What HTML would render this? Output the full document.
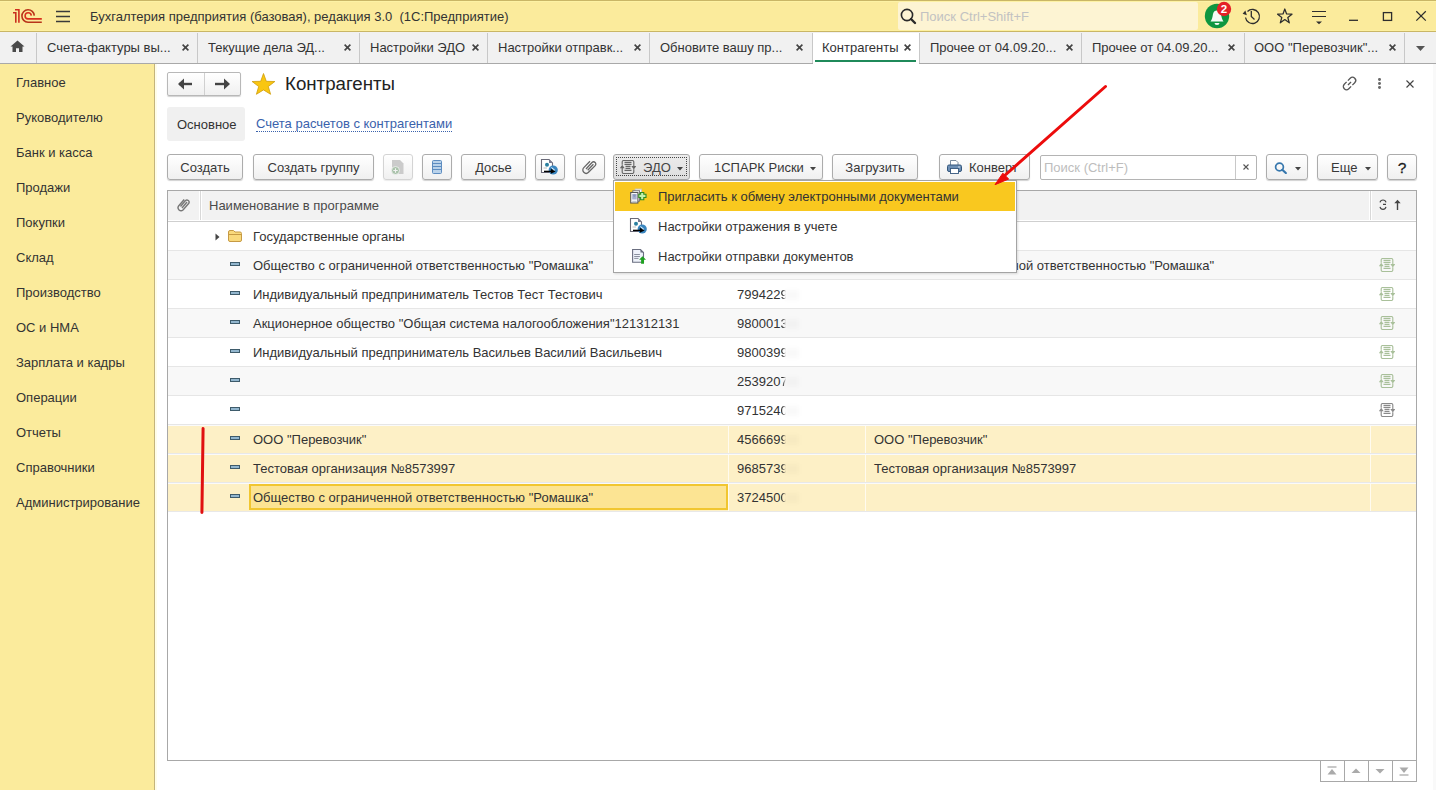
<!DOCTYPE html>
<html><head><meta charset="utf-8">
<style>
*{box-sizing:border-box;margin:0;padding:0}
html,body{width:1436px;height:790px;overflow:hidden;background:#fff;font-family:"Liberation Sans",sans-serif;font-size:13px;color:#333}
.a{position:absolute}
#title{left:0;top:0;width:1436px;height:32px;background:#fbeb9c;border-top:1px solid #c9b666;border-bottom:1px solid #c9b666;box-shadow:inset 0 1px 0 #fdf2a4,inset 0 -1px 0 #fdf0a0}
#tabs{left:0;top:32px;width:1436px;height:32px;background:#f1f1f1;border-bottom:1px solid #a9a9a9}
.sep{position:absolute;top:1px;width:1px;height:30px;background:#c8c8c8}
.tt{position:absolute;top:1px;line-height:30px;white-space:nowrap;color:#333;font-size:13px}
.tx{position:absolute;top:1px;line-height:30px;font-size:15px;color:#444;font-weight:bold}
#side{left:0;top:64px;width:155px;height:726px;background:#fbeb9c;border-right:1px solid #c4b47c;box-shadow:2px 0 0 #fffde9}
.nav{position:absolute;left:16px;font-size:13px;color:#333;line-height:16px}
.btn{position:absolute;top:154px;height:26px;border:1px solid #acacac;border-radius:3px;background:linear-gradient(#ffffff,#f0f0f0);box-shadow:0 1px 1px rgba(0,0,0,.18);text-align:center;line-height:25px;color:#383838;font-size:13px;white-space:nowrap}
.row{position:absolute;left:168px;width:1248px;height:29px;border-bottom:1px solid #e6e6e6}
.c{position:absolute;top:0;line-height:28px;white-space:nowrap;color:#333;font-size:13px}
.dash{position:absolute;left:61px;top:12px;width:11px;height:4px;background:#8fb0c8;border:1px solid #6b8fa8;border-radius:1px}
</style></head><body>
<!-- TITLE BAR -->
<div id="title" class="a">
  <svg class="a" style="left:0;top:-1px" width="76" height="31" viewBox="0 0 76 31"><g fill="none" stroke-width="1.6">
<path d="M13 12.7 H15.8 V22.8" stroke="#c8301e"/><path d="M15 9.8 H18.9 V22.8" stroke="#d0301e"/>
<path d="M34.3 15.6 A6.2 6.2 0 1 0 28 22.2 H41.8" stroke="#b8341a"/>
<path d="M31.3 15.6 A3.1 3.1 0 1 0 28 18.9 H41.8" stroke="#d8301e"/></g>
<path d="M56 11.5 H70 M56 16.5 H70 M56 21.5 H70" stroke="#3a3a3a" stroke-width="1.3"/></svg>
<div class="a" style="left:90px;top:8px;font-size:13px;color:#333;white-space:nowrap;line-height:16px">Бухгалтерия предприятия (базовая), редакция 3.0&nbsp;&nbsp;(1С:Предприятие)</div>
  <div class="a" style="left:898px;top:1px;width:300px;height:28px;background:#fdf4d3;border-radius:2px"></div>
  <div class="a" style="left:920px;top:8px;font-size:13px;color:#c2c2c2;white-space:nowrap;line-height:16px">Поиск Ctrl+Shift+F</div>
</div>
<svg class="a" style="left:900px;top:8px" width="17" height="17" viewBox="0 0 17 17"><circle cx="7" cy="7" r="5.6" fill="none" stroke="#2a2a2a" stroke-width="1.6"/><path d="M11 11 L15 15" stroke="#2a2a2a" stroke-width="2.4" stroke-linecap="round"/></svg>
<svg class="a" style="left:1200px;top:0" width="236" height="31" viewBox="0 0 236 31">
<circle cx="17" cy="16" r="12.2" fill="#0e9640"/>
<path d="M10.5 21.5 C12 20 12.5 17 13 14 C13.5 11.5 15 10.5 17 10.5 C19 10.5 20.5 11.5 21 14 C21.5 17 22 20 23.5 21.5 Z" fill="#f4fbf6"/>
<path d="M14.5 23 H19.5 A2.5 2 0 0 1 14.5 23 Z" fill="#f4fbf6"/>
<circle cx="24" cy="9" r="7.2" fill="#e42127"/>
<text x="24" y="13" text-anchor="middle" font-family="Liberation Sans" font-weight="bold" font-size="11.5" fill="#fff">2</text>
<g fill="none" stroke="#2e2e2e" stroke-width="1.3"><path d="M45.5 17.5 A7 7 0 1 0 47.5 11.5"/><path d="M51.3 11 V16.5 L54.5 19.5"/></g>
<path d="M43 14.5 L47.5 14.5 L44.5 10.5 Z" fill="#2e2e2e" transform="rotate(20 45 13)"/>
<path d="M84.8 9 L86.6 14 L92 14.2 L87.8 17.5 L89.3 22.8 L84.8 19.6 L80.3 22.8 L81.8 17.5 L77.6 14.2 L83 14 Z" fill="none" stroke="#2e2e2e" stroke-width="1.25" stroke-linejoin="round"/>
<path d="M112 11.5 H126 M112 16.5 H126" stroke="#2e2e2e" stroke-width="1.2"/><path d="M116 21.5 H122 L119 24.3 Z" fill="#2e2e2e"/>
<path d="M149 20.3 H158" stroke="#2e2e2e" stroke-width="1.3"/>
<rect x="183.4" y="12.6" width="8.2" height="7.8" fill="none" stroke="#2e2e2e" stroke-width="1.3"/>
<path d="M216.3 11.2 L225.8 20.6 M225.8 11.2 L216.3 20.6" stroke="#2e2e2e" stroke-width="1.25"/>
</svg>
<!-- TABS -->
<div id="tabs" class="a">
  <svg class="a" style="left:10px;top:8px" width="15" height="13" viewBox="0 0 15 14" preserveAspectRatio="none"><path d="M7.5 0.5 L14.5 7 H12.5 V13 H9 V9 H6 V13 H2.5 V7 H0.5 Z" fill="#4a4a4a"/></svg>
  <div class="sep" style="left:36px"></div>
  <div class="tt" style="left:47px">Счета-фактуры вы...</div><svg class="a" style="left:182.1px;top:11.5px" width="7" height="7" viewBox="0 0 7 7"><path d="M0.6 0.6 L6.4 6.4 M6.4 0.6 L0.6 6.4" stroke="#444" stroke-width="1.6"/></svg>
  <div class="sep" style="left:197px"></div>
  <div class="tt" style="left:208px">Текущие дела ЭД...</div><svg class="a" style="left:343.5px;top:11.5px" width="7" height="7" viewBox="0 0 7 7"><path d="M0.6 0.6 L6.4 6.4 M6.4 0.6 L0.6 6.4" stroke="#444" stroke-width="1.6"/></svg>
  <div class="sep" style="left:359px"></div>
  <div class="tt" style="left:370px">Настройки ЭДО</div><svg class="a" style="left:471.5px;top:11.5px" width="7" height="7" viewBox="0 0 7 7"><path d="M0.6 0.6 L6.4 6.4 M6.4 0.6 L0.6 6.4" stroke="#444" stroke-width="1.6"/></svg>
  <div class="sep" style="left:487px"></div>
  <div class="tt" style="left:498px">Настройки отправк...</div><svg class="a" style="left:634.0px;top:11.5px" width="7" height="7" viewBox="0 0 7 7"><path d="M0.6 0.6 L6.4 6.4 M6.4 0.6 L0.6 6.4" stroke="#444" stroke-width="1.6"/></svg>
  <div class="sep" style="left:649px"></div>
  <div class="tt" style="left:660px">Обновите вашу пр...</div><svg class="a" style="left:796.2px;top:11.5px" width="7" height="7" viewBox="0 0 7 7"><path d="M0.6 0.6 L6.4 6.4 M6.4 0.6 L0.6 6.4" stroke="#444" stroke-width="1.6"/></svg>
  <div class="sep" style="left:812px"></div>
  <div class="a" style="left:813px;top:1px;width:106px;height:31px;background:#fff"></div>
  <div class="a" style="left:815px;top:28px;width:101px;height:2px;background:#1f8a5a"></div>
  <div class="tt" style="left:822px">Контрагенты</div><svg class="a" style="left:903.5px;top:11.5px" width="7" height="7" viewBox="0 0 7 7"><path d="M0.6 0.6 L6.4 6.4 M6.4 0.6 L0.6 6.4" stroke="#444" stroke-width="1.6"/></svg>
  <div class="sep" style="left:919px"></div>
  <div class="tt" style="left:930px">Прочее от 04.09.20...</div><svg class="a" style="left:1065.5px;top:11.5px" width="7" height="7" viewBox="0 0 7 7"><path d="M0.6 0.6 L6.4 6.4 M6.4 0.6 L0.6 6.4" stroke="#444" stroke-width="1.6"/></svg>
  <div class="sep" style="left:1081px"></div>
  <div class="tt" style="left:1092px">Прочее от 04.09.20...</div><svg class="a" style="left:1227.5px;top:11.5px" width="7" height="7" viewBox="0 0 7 7"><path d="M0.6 0.6 L6.4 6.4 M6.4 0.6 L0.6 6.4" stroke="#444" stroke-width="1.6"/></svg>
  <div class="sep" style="left:1244px"></div>
  <div class="tt" style="left:1254px">ООО "Перевозчик"...</div><svg class="a" style="left:1388.5px;top:11.5px" width="7" height="7" viewBox="0 0 7 7"><path d="M0.6 0.6 L6.4 6.4 M6.4 0.6 L0.6 6.4" stroke="#444" stroke-width="1.6"/></svg>
  <div class="sep" style="left:1404px"></div>
  <svg class="a" style="left:1416px;top:14px" width="9" height="5" viewBox="0 0 9 5"><path d="M0 0 H9 L4.5 5 Z" fill="#555"/></svg>
</div>
<!-- SIDEBAR -->
<div id="side" class="a">
  <div class="nav" style="top:11px">Главное</div>
  <div class="nav" style="top:46px">Руководителю</div>
  <div class="nav" style="top:81px">Банк и касса</div>
  <div class="nav" style="top:116px">Продажи</div>
  <div class="nav" style="top:151px">Покупки</div>
  <div class="nav" style="top:186px">Склад</div>
  <div class="nav" style="top:221px">Производство</div>
  <div class="nav" style="top:256px">ОС и НМА</div>
  <div class="nav" style="top:291px">Зарплата и кадры</div>
  <div class="nav" style="top:326px">Операции</div>
  <div class="nav" style="top:361px">Отчеты</div>
  <div class="nav" style="top:396px">Справочники</div>
  <div class="nav" style="top:431px">Администрирование</div>
</div>
<!-- TABLE -->
<div class="a" style="left:167px;top:190px;width:1250px;height:571px;border:1px solid #a8a8a8;background:#fff"></div>
<div class="a" style="left:168px;top:191px;width:1248px;height:31px;background:#f2f2f2;border-bottom:1px solid #cfcfcf"></div>
<div class="a" style="left:200px;top:191px;width:1px;height:30px;background:#d8d8d8"></div>
<div class="a" style="left:1370px;top:191px;width:1px;height:30px;background:#d8d8d8"></div>
<svg class="a" style="left:177px;top:197px" width="14" height="16" viewBox="0 0 14 16"><path d="M3.5 9.5 L8.5 3.5 A2.2 2.2 0 0 1 11.8 6.3 L6 13 A3 3 0 0 1 1.6 9 L7.2 2.5 M5 11 L10 5" fill="none" stroke="#777" stroke-width="1.4"/></svg>
<div class="a" style="left:209px;top:198px;font-size:13px;color:#4a4a4a;line-height:16px;white-space:nowrap">Наименование в программе</div>
<svg class="a" style="left:1378px;top:199px" width="10" height="12" viewBox="0 0 10 12"><g fill="none" stroke="#444" stroke-width="1.15"><path d="M2 3.3 C2.5 1.5 4 1 5 1 S7.5 1.5 8 3.3 M5 5.3 H8 M2 7.8 C2.5 9.8 4 10.3 5 10.3 S7.5 9.8 8 7.8"/></g></svg>
<div class="a" style="left:168px;top:220px;width:1248px;height:1px;background:#fff"></div>
<div class="a" style="left:199px;top:191px;width:1px;height:29px;background:#fff"></div><div class="a" style="left:201px;top:191px;width:1px;height:29px;background:#fff"></div>
<div class="a" style="left:1369px;top:191px;width:1px;height:29px;background:#fff"></div><div class="a" style="left:1371px;top:191px;width:1px;height:29px;background:#fff"></div>
<svg class="a" style="left:1393px;top:199px" width="9" height="12" viewBox="0 0 9 12"><path d="M4.5 3 V11" stroke="#444" stroke-width="1.4"/><path d="M1.3 4.3 L4.5 0.8 L7.7 4.3 Z" fill="#444"/></svg>
<div class="a" style="left:168px;top:222px;width:1248px;height:29px;background:#fff;border-bottom:1px solid #e6e6e6"></div>
<div class="a" style="left:168px;top:251px;width:1248px;height:29px;background:#f8f8f8;border-bottom:1px solid #e6e6e6"></div>
<div class="a" style="left:168px;top:280px;width:1248px;height:29px;background:#fff;border-bottom:1px solid #e6e6e6"></div>
<div class="a" style="left:168px;top:309px;width:1248px;height:29px;background:#f8f8f8;border-bottom:1px solid #e6e6e6"></div>
<div class="a" style="left:168px;top:338px;width:1248px;height:29px;background:#fff;border-bottom:1px solid #e6e6e6"></div>
<div class="a" style="left:168px;top:367px;width:1248px;height:29px;background:#f8f8f8;border-bottom:1px solid #e6e6e6"></div>
<div class="a" style="left:168px;top:396px;width:1248px;height:29px;background:#fff;border-bottom:1px solid #e6e6e6"></div>
<div class="a" style="left:168px;top:425px;width:1248px;height:29px;background:#fdf0c6;border-top:1px solid #fafafa;border-bottom:1px solid #e8e8e8"></div>
<div class="a" style="left:728px;top:426px;width:1px;height:27px;background:#fffbef"></div>
<div class="a" style="left:865px;top:426px;width:1px;height:27px;background:#fffbef"></div>
<div class="a" style="left:1370px;top:426px;width:1px;height:27px;background:#fffbef"></div>
<div class="a" style="left:168px;top:454px;width:1248px;height:29px;background:#fdf0c6;border-top:1px solid #fafafa;border-bottom:1px solid #e8e8e8"></div>
<div class="a" style="left:728px;top:455px;width:1px;height:27px;background:#fffbef"></div>
<div class="a" style="left:865px;top:455px;width:1px;height:27px;background:#fffbef"></div>
<div class="a" style="left:1370px;top:455px;width:1px;height:27px;background:#fffbef"></div>
<div class="a" style="left:168px;top:483px;width:1248px;height:29px;background:#fdf0c6;border-top:1px solid #fafafa;border-bottom:1px solid #e8e8e8"></div>
<div class="a" style="left:728px;top:484px;width:1px;height:27px;background:#fffbef"></div>
<div class="a" style="left:865px;top:484px;width:1px;height:27px;background:#fffbef"></div>
<div class="a" style="left:1370px;top:484px;width:1px;height:27px;background:#fffbef"></div>
<svg class="a" style="left:215px;top:233px" width="5" height="8" viewBox="0 0 5 8"><path d="M0.5 0.5 L4.5 4 L0.5 7.5 Z" fill="#444"/></svg>
<svg class="a" style="left:228px;top:230px" width="14" height="12" viewBox="0 0 14 12"><path d="M0.5 2 A1.5 1.5 0 0 1 2 0.5 H5.5 L7 2 H12 A1.5 1.5 0 0 1 13.5 3.5 V10 A1.5 1.5 0 0 1 12 11.5 H2 A1.5 1.5 0 0 1 0.5 10 Z" fill="#f9d97c" stroke="#c69a44"/><path d="M0.5 4.5 H13.5" stroke="#c69a44"/></svg>
<div class="a" style="left:253px;top:229px;font-size:13px;color:#333;line-height:16px;white-space:nowrap">Государственные органы</div>
<div class="a" style="left:230px;top:262px;width:10px;height:4px;background:#92b6ce;border:1px solid #3e5b6b"></div>
<div class="a" style="left:253px;top:258px;font-size:13px;color:#333;line-height:16px;white-space:nowrap">Общество с ограниченной ответственностью "Ромашка"</div>
<div class="a" style="left:874px;top:258px;font-size:13px;color:#333;line-height:16px;white-space:nowrap">Общество с ограниченной ответственностью "Ромашка"</div>
<svg class="a" style="left:1379px;top:257.5px" width="16" height="14" viewBox="0 0 16 14"><g fill="none" stroke="#a9c09a" stroke-width="1.15"><path d="M2.2 4.8 V2 A1.5 1.5 0 0 1 3.7 0.5 H12.3 A1.5 1.5 0 0 1 13.8 2 V6.5 M13.8 9.2 V12 A1.5 1.5 0 0 1 12.3 13.5 H3.7 A1.5 1.5 0 0 1 2.2 12 V7.8 M4.5 2.3 H11.5 M4.5 4.3 H11.5 M5.5 6.4 H10.5 M5.5 8.4 H10.5 M4.5 10.4 H11.5"/></g><path d="M-0.3 8.3 L2.2 4.8 L4.7 8.3 Z M11.3 6 L13.8 9.5 L16.3 6 Z" fill="#a9c09a"/></svg>
<div class="a" style="left:230px;top:291px;width:10px;height:4px;background:#92b6ce;border:1px solid #3e5b6b"></div>
<div class="a" style="left:253px;top:287px;font-size:13px;color:#333;line-height:16px;white-space:nowrap">Индивидуальный предприниматель Тестов Тест Тестович</div>
<div class="a" style="left:737px;top:287px;font-size:13px;color:#333;line-height:16px;white-space:nowrap">799422<span style="display:inline-block;-webkit-mask-image:linear-gradient(to right,#000 35%,transparent 75%)">9</span></div>
<div class="a" style="left:785px;top:290px;width:14px;height:10px;background:rgba(0,0,0,.025);filter:blur(2px)"></div>
<svg class="a" style="left:1379px;top:286.5px" width="16" height="14" viewBox="0 0 16 14"><g fill="none" stroke="#a9c09a" stroke-width="1.15"><path d="M2.2 4.8 V2 A1.5 1.5 0 0 1 3.7 0.5 H12.3 A1.5 1.5 0 0 1 13.8 2 V6.5 M13.8 9.2 V12 A1.5 1.5 0 0 1 12.3 13.5 H3.7 A1.5 1.5 0 0 1 2.2 12 V7.8 M4.5 2.3 H11.5 M4.5 4.3 H11.5 M5.5 6.4 H10.5 M5.5 8.4 H10.5 M4.5 10.4 H11.5"/></g><path d="M-0.3 8.3 L2.2 4.8 L4.7 8.3 Z M11.3 6 L13.8 9.5 L16.3 6 Z" fill="#a9c09a"/></svg>
<div class="a" style="left:230px;top:320px;width:10px;height:4px;background:#92b6ce;border:1px solid #3e5b6b"></div>
<div class="a" style="left:253px;top:316px;font-size:13px;color:#333;line-height:16px;white-space:nowrap">Акционерное общество "Общая система налогообложения"121312131</div>
<div class="a" style="left:737px;top:316px;font-size:13px;color:#333;line-height:16px;white-space:nowrap">980001<span style="display:inline-block;-webkit-mask-image:linear-gradient(to right,#000 35%,transparent 75%)">3</span></div>
<div class="a" style="left:785px;top:319px;width:14px;height:10px;background:rgba(0,0,0,.025);filter:blur(2px)"></div>
<svg class="a" style="left:1379px;top:315.5px" width="16" height="14" viewBox="0 0 16 14"><g fill="none" stroke="#a9c09a" stroke-width="1.15"><path d="M2.2 4.8 V2 A1.5 1.5 0 0 1 3.7 0.5 H12.3 A1.5 1.5 0 0 1 13.8 2 V6.5 M13.8 9.2 V12 A1.5 1.5 0 0 1 12.3 13.5 H3.7 A1.5 1.5 0 0 1 2.2 12 V7.8 M4.5 2.3 H11.5 M4.5 4.3 H11.5 M5.5 6.4 H10.5 M5.5 8.4 H10.5 M4.5 10.4 H11.5"/></g><path d="M-0.3 8.3 L2.2 4.8 L4.7 8.3 Z M11.3 6 L13.8 9.5 L16.3 6 Z" fill="#a9c09a"/></svg>
<div class="a" style="left:230px;top:349px;width:10px;height:4px;background:#92b6ce;border:1px solid #3e5b6b"></div>
<div class="a" style="left:253px;top:345px;font-size:13px;color:#333;line-height:16px;white-space:nowrap">Индивидуальный предприниматель Васильев Василий Васильевич</div>
<div class="a" style="left:737px;top:345px;font-size:13px;color:#333;line-height:16px;white-space:nowrap">980039<span style="display:inline-block;-webkit-mask-image:linear-gradient(to right,#000 35%,transparent 75%)">9</span></div>
<div class="a" style="left:785px;top:348px;width:14px;height:10px;background:rgba(0,0,0,.025);filter:blur(2px)"></div>
<svg class="a" style="left:1379px;top:344.5px" width="16" height="14" viewBox="0 0 16 14"><g fill="none" stroke="#a9c09a" stroke-width="1.15"><path d="M2.2 4.8 V2 A1.5 1.5 0 0 1 3.7 0.5 H12.3 A1.5 1.5 0 0 1 13.8 2 V6.5 M13.8 9.2 V12 A1.5 1.5 0 0 1 12.3 13.5 H3.7 A1.5 1.5 0 0 1 2.2 12 V7.8 M4.5 2.3 H11.5 M4.5 4.3 H11.5 M5.5 6.4 H10.5 M5.5 8.4 H10.5 M4.5 10.4 H11.5"/></g><path d="M-0.3 8.3 L2.2 4.8 L4.7 8.3 Z M11.3 6 L13.8 9.5 L16.3 6 Z" fill="#a9c09a"/></svg>
<div class="a" style="left:230px;top:378px;width:10px;height:4px;background:#92b6ce;border:1px solid #3e5b6b"></div>
<div class="a" style="left:737px;top:374px;font-size:13px;color:#333;line-height:16px;white-space:nowrap">253920<span style="display:inline-block;-webkit-mask-image:linear-gradient(to right,#000 35%,transparent 75%)">7</span></div>
<div class="a" style="left:785px;top:377px;width:14px;height:10px;background:rgba(0,0,0,.025);filter:blur(2px)"></div>
<svg class="a" style="left:1379px;top:373.5px" width="16" height="14" viewBox="0 0 16 14"><g fill="none" stroke="#a9c09a" stroke-width="1.15"><path d="M2.2 4.8 V2 A1.5 1.5 0 0 1 3.7 0.5 H12.3 A1.5 1.5 0 0 1 13.8 2 V6.5 M13.8 9.2 V12 A1.5 1.5 0 0 1 12.3 13.5 H3.7 A1.5 1.5 0 0 1 2.2 12 V7.8 M4.5 2.3 H11.5 M4.5 4.3 H11.5 M5.5 6.4 H10.5 M5.5 8.4 H10.5 M4.5 10.4 H11.5"/></g><path d="M-0.3 8.3 L2.2 4.8 L4.7 8.3 Z M11.3 6 L13.8 9.5 L16.3 6 Z" fill="#a9c09a"/></svg>
<div class="a" style="left:230px;top:407px;width:10px;height:4px;background:#92b6ce;border:1px solid #3e5b6b"></div>
<div class="a" style="left:737px;top:403px;font-size:13px;color:#333;line-height:16px;white-space:nowrap">971524<span style="display:inline-block;-webkit-mask-image:linear-gradient(to right,#000 35%,transparent 75%)">0</span></div>
<div class="a" style="left:785px;top:406px;width:14px;height:10px;background:rgba(0,0,0,.025);filter:blur(2px)"></div>
<svg class="a" style="left:1379px;top:402.5px" width="16" height="14" viewBox="0 0 16 14"><g fill="none" stroke="#8a8a8a" stroke-width="1.15"><path d="M2.2 4.8 V2 A1.5 1.5 0 0 1 3.7 0.5 H12.3 A1.5 1.5 0 0 1 13.8 2 V6.5 M13.8 9.2 V12 A1.5 1.5 0 0 1 12.3 13.5 H3.7 A1.5 1.5 0 0 1 2.2 12 V7.8 M4.5 2.3 H11.5 M4.5 4.3 H11.5 M5.5 6.4 H10.5 M5.5 8.4 H10.5 M4.5 10.4 H11.5"/></g><path d="M-0.3 8.3 L2.2 4.8 L4.7 8.3 Z M11.3 6 L13.8 9.5 L16.3 6 Z" fill="#8a8a8a"/></svg>
<div class="a" style="left:230px;top:436px;width:10px;height:4px;background:#92b6ce;border:1px solid #3e5b6b"></div>
<div class="a" style="left:253px;top:432px;font-size:13px;color:#333;line-height:16px;white-space:nowrap">ООО "Перевозчик"</div>
<div class="a" style="left:737px;top:432px;font-size:13px;color:#333;line-height:16px;white-space:nowrap">456669<span style="display:inline-block;-webkit-mask-image:linear-gradient(to right,#000 35%,transparent 75%)">9</span></div>
<div class="a" style="left:785px;top:435px;width:14px;height:10px;background:rgba(0,0,0,.025);filter:blur(2px)"></div>
<div class="a" style="left:874px;top:432px;font-size:13px;color:#333;line-height:16px;white-space:nowrap">ООО "Перевозчик"</div>
<div class="a" style="left:230px;top:465px;width:10px;height:4px;background:#92b6ce;border:1px solid #3e5b6b"></div>
<div class="a" style="left:253px;top:461px;font-size:13px;color:#333;line-height:16px;white-space:nowrap">Тестовая организация №8573997</div>
<div class="a" style="left:737px;top:461px;font-size:13px;color:#333;line-height:16px;white-space:nowrap">968573<span style="display:inline-block;-webkit-mask-image:linear-gradient(to right,#000 35%,transparent 75%)">9</span></div>
<div class="a" style="left:785px;top:464px;width:14px;height:10px;background:rgba(0,0,0,.025);filter:blur(2px)"></div>
<div class="a" style="left:874px;top:461px;font-size:13px;color:#333;line-height:16px;white-space:nowrap">Тестовая организация №8573997</div>
<div class="a" style="left:249px;top:484px;width:479px;height:26px;background:#fce493;border:2px solid #f1c630"></div>
<div class="a" style="left:230px;top:494px;width:10px;height:4px;background:#92b6ce;border:1px solid #3e5b6b"></div>
<div class="a" style="left:253px;top:490px;font-size:13px;color:#333;line-height:16px;white-space:nowrap">Общество с ограниченной ответственностью "Ромашка"</div>
<div class="a" style="left:737px;top:490px;font-size:13px;color:#333;line-height:16px;white-space:nowrap">372450<span style="display:inline-block;-webkit-mask-image:linear-gradient(to right,#000 35%,transparent 75%)">0</span></div>
<div class="a" style="left:785px;top:493px;width:14px;height:10px;background:rgba(0,0,0,.025);filter:blur(2px)"></div>
<div class="a" style="left:201px;top:427px;width:3px;height:87px;background:#e01010;border-radius:1.5px;transform:rotate(0.8deg)"></div>
<div class="a" style="left:1320px;top:760px;width:97px;height:22px;border:1px solid #a8a8a8;background:#fff"></div>
<div class="a" style="left:1344px;top:760px;width:1px;height:21px;background:#a8a8a8"></div>
<div class="a" style="left:1368px;top:760px;width:1px;height:21px;background:#a8a8a8"></div>
<div class="a" style="left:1392px;top:760px;width:1px;height:21px;background:#a8a8a8"></div>
<svg class="a" style="left:1326px;top:766px" width="12" height="10" viewBox="0 0 12 10"><path d="M1.5 1 H10.5" stroke="#aaa" stroke-width="1.3"/><path d="M1.5 8.5 L6 3 L10.5 8.5 Z" fill="#aaa"/></svg>
<svg class="a" style="left:1350px;top:766px" width="12" height="10" viewBox="0 0 12 10"><path d="M1.5 7 L6 2.5 L10.5 7 Z" fill="#aaa"/></svg>
<svg class="a" style="left:1374px;top:766px" width="12" height="10" viewBox="0 0 12 10"><path d="M1.5 3 L6 7.5 L10.5 3 Z" fill="#aaa"/></svg>
<svg class="a" style="left:1398px;top:766px" width="12" height="10" viewBox="0 0 12 10"><path d="M1.5 9 H10.5" stroke="#aaa" stroke-width="1.3"/><path d="M1.5 1.5 L6 7 L10.5 1.5 Z" fill="#aaa"/></svg>
<div class="a" style="left:1433px;top:64px;width:3px;height:726px;background:#f9f9f9"></div>
<!-- PAGE HEADER -->
<div class="a" style="left:167px;top:72px;width:74px;height:24px;border:1px solid #b8b8b8;border-radius:2px;background:linear-gradient(#fff,#f0f0f0);box-shadow:0 1px 1px rgba(0,0,0,.18)"></div>
<div class="a" style="left:204px;top:73px;width:1px;height:22px;background:#d0d0d0"></div>
<svg class="a" style="left:178px;top:78px" width="16" height="12" viewBox="0 0 16 12"><path d="M1 6 H14" stroke="#444" stroke-width="2.4"/><path d="M0 6 L6 0.5 V11.5 Z" fill="#444"/></svg>
<svg class="a" style="left:214px;top:78px" width="16" height="12" viewBox="0 0 16 12"><path d="M1 6 H14" stroke="#444" stroke-width="2.4"/><path d="M16 6 L10 0.5 V11.5 Z" fill="#444"/></svg>
<svg class="a" style="left:251px;top:72px" width="25" height="23" viewBox="0 0 25 23"><path d="M12.5 1.5 L15.3 9.3 L23.9 9.5 L17.3 14.5 L19.6 22.3 L12.5 17.9 L5.4 22.3 L7.7 14.5 L1.1 9.5 L9.7 9.3 Z" fill="#f9c611" stroke="#cf9d0a" stroke-width="0.8" stroke-linejoin="round"/></svg>
<div class="a" style="left:285px;top:73px;font-size:18.7px;color:#222;white-space:nowrap;line-height:22px">Контрагенты</div>
<svg class="a" style="left:1341px;top:75px" width="17" height="17" viewBox="0 0 17 17"><g transform="rotate(-45 8.5 8.5)" fill="none" stroke="#555" stroke-width="1.3"><path d="M7.6 5.3 H4.3 A3.2 3.2 0 0 0 4.3 11.7 H7.6 M9.4 5.3 H12.7 A3.2 3.2 0 0 1 12.7 11.7 H9.4 M6.3 8.5 H10.7"/></g></svg>
<div class="a" style="left:1378px;top:78.2px;width:2.8px;height:2.8px;border-radius:50%;background:#6a6a6a"></div>
<div class="a" style="left:1378px;top:82.2px;width:2.8px;height:2.8px;border-radius:50%;background:#6a6a6a"></div>
<div class="a" style="left:1378px;top:86.2px;width:2.8px;height:2.8px;border-radius:50%;background:#6a6a6a"></div>
<svg class="a" style="left:1405.5px;top:79.5px" width="8" height="8" viewBox="0 0 8 8"><path d="M0.5 0.5 L7.5 7.5 M7.5 0.5 L0.5 7.5" stroke="#444" stroke-width="1.15"/></svg>
<div class="a" style="left:167px;top:107px;width:78px;height:34px;background:#f0f0f0;border-radius:3px"></div>
<div class="a" style="left:177px;top:117px;font-size:13px;color:#333;line-height:16px">Основное</div>
<div class="a" style="left:256px;top:117px;font-size:13px;color:#3a62ac;line-height:14px;border-bottom:1px dotted #3a62ac;white-space:nowrap">Счета расчетов с контрагентами</div>
<!-- TOOLBAR -->
<div class="btn" style="left:167px;width:76px">Создать</div>
<div class="btn" style="left:253px;width:121px">Создать группу</div>
<div class="btn" style="left:383px;width:30px;border-color:#d4d4d4;box-shadow:0 1px 1px rgba(0,0,0,.08)"></div>
<svg class="a" style="left:390px;top:159px" width="16" height="17" viewBox="0 0 16 17"><path d="M2 1 H10 L13.5 4.5 V15 H2 Z" fill="#cbcbcb"/><circle cx="5.5" cy="11.5" r="4" fill="#a9c2aa" stroke="#f4f4f4" stroke-width="0.8"/><path d="M5.5 9.3 V13.7 M3.3 11.5 H7.7" stroke="#f2f2f2" stroke-width="1.1"/></svg>
<div class="btn" style="left:422px;width:30px"></div>
<svg class="a" style="left:432px;top:160px" width="10" height="14" viewBox="0 0 10 14"><rect x="0.5" y="0.5" width="9" height="13" rx="1" fill="#b9d2ea" stroke="#5d8cc0"/><path d="M0.5 3.5 H9.5 M0.5 6.5 H9.5 M0.5 9.5 H9.5" stroke="#5d8cc0"/></svg>
<div class="btn" style="left:461px;width:65px">Досье</div>
<div class="btn" style="left:535px;width:30px"></div>
<svg class="a" style="left:536px;top:155px" width="26" height="24" viewBox="0 0 26 24"><path d="M5.5 4.5 H13 L16.5 8 V17.5 H5.5 Z" fill="#fff" stroke="#6a6a78" stroke-width="1.1"/><path d="M13 4.5 V8 H16.5 Z" fill="#7a7a90"/><path d="M7.5 13 H11" stroke="#b0b0b0" stroke-width="0.8"/><circle cx="11" cy="9.8" r="2" fill="#2a7fa0"/><circle cx="17.2" cy="15" r="4.6" fill="#3a86c0"/><path d="M15.5 12.5 L18.5 15 L15.5 17.5" fill="none" stroke="#fff" stroke-width="1"/><path d="M8 16.4 H15.5" stroke="#000" stroke-width="1.4"/><path d="M14.8 13.8 L19.6 16.4 L14.8 18.8 Z" fill="#000"/></svg>
<div class="btn" style="left:575px;width:30px"></div>
<svg class="a" style="left:582px;top:159px" width="16" height="16" viewBox="0 0 16 16"><path d="M4 10 L10 3.5 A2.2 2.2 0 0 1 13.2 6.6 L6.5 13.3 A3.3 3.3 0 0 1 1.8 8.6 L8 2.3 M5.7 11.2 L11.4 5.3" fill="none" stroke="#666" stroke-width="1.3"/></svg>
<div class="btn" style="left:613px;width:77px;background:linear-gradient(#ececec,#dedede);border-color:#a8a8a8;box-shadow:none"></div>
<div class="a" style="left:616px;top:157px;width:71px;height:19px;border:1px dotted #444"></div>
<svg class="a" style="left:620px;top:160px" width="16" height="14" viewBox="0 0 16 14"><g fill="none" stroke="#666" stroke-width="1.15"><path d="M2.2 4.8 V2 A1.5 1.5 0 0 1 3.7 0.5 H12.3 A1.5 1.5 0 0 1 13.8 2 V6.5 M13.8 9.2 V12 A1.5 1.5 0 0 1 12.3 13.5 H3.7 A1.5 1.5 0 0 1 2.2 12 V7.8 M4.5 2.3 H11.5 M4.5 4.3 H11.5 M5.5 6.4 H10.5 M5.5 8.4 H10.5 M4.5 10.4 H11.5"/></g><path d="M-0.3 8.3 L2.2 4.8 L4.7 8.3 Z M11.3 6 L13.8 9.5 L16.3 6 Z" fill="#666"/></svg>
<div class="a" style="left:643px;top:160px;font-size:13px;color:#444;line-height:16px">ЭДО</div>
<svg class="a" style="left:677px;top:167px" width="6" height="4" viewBox="0 0 6 4"><path d="M0 0 H6 L3 3.5 Z" fill="#444"/></svg>
<div class="btn" style="left:699px;width:124px;text-align:left;padding-left:14px">1СПАРК Риски</div>
<svg class="a" style="left:810px;top:167px" width="6" height="4" viewBox="0 0 6 4"><path d="M0 0 H6 L3 3.5 Z" fill="#444"/></svg>
<div class="btn" style="left:832px;width:86px">Загрузить</div>
<div class="btn" style="left:939px;width:91px;text-align:left;padding-left:29px">Конверт</div>
<svg class="a" style="left:947px;top:160px" width="15" height="14" viewBox="0 0 15 14"><path d="M3.5 0.5 H9 L11 2.5 V5.5 H3.5 Z" fill="#fff" stroke="#6b7f94" stroke-width="0.9"/><rect x="0.5" y="5" width="14" height="6.5" rx="1.5" fill="#6d8fb5" stroke="#34577d" stroke-width="1"/><rect x="3.5" y="8.5" width="8" height="5" fill="#fff" stroke="#34577d" stroke-width="0.9"/><circle cx="12" cy="7" r="0.7" fill="#fff"/></svg>
<div class="a" style="left:1040px;top:155px;width:217px;height:25px;border:1px solid #b4b4b4;border-radius:2px;background:#fff"></div>
<div class="a" style="left:1235px;top:156px;width:1px;height:23px;background:#c8c8c8"></div>
<div class="a" style="left:1044px;top:160px;font-size:13px;color:#bdbdbd;line-height:16px;white-space:nowrap">Поиск (Ctrl+F)</div>
<svg class="a" style="left:1242.5px;top:164px" width="6" height="6" viewBox="0 0 6 6"><path d="M0.5 0.5 L5.5 5.5 M5.5 0.5 L0.5 5.5" stroke="#555" stroke-width="1.1"/></svg>
<div class="btn" style="left:1266px;width:42px"></div>
<svg class="a" style="left:1274px;top:162px" width="14" height="12" viewBox="0 0 14 12"><circle cx="5.5" cy="5" r="3.9" fill="none" stroke="#3677ad" stroke-width="1.7"/><path d="M8.3 7.8 L11.8 11" stroke="#3677ad" stroke-width="2.2" stroke-linecap="round"/></svg>
<svg class="a" style="left:1295px;top:167px" width="6" height="4" viewBox="0 0 6 4"><path d="M0 0 H6 L3 3.5 Z" fill="#444"/></svg>
<div class="btn" style="left:1317px;width:61px;text-align:left;padding-left:13px">Еще</div>
<svg class="a" style="left:1365px;top:167px" width="6" height="4" viewBox="0 0 6 4"><path d="M0 0 H6 L3 3.5 Z" fill="#444"/></svg>
<div class="btn" style="left:1387px;width:30px;font-size:15.5px;color:#1a1a1a;-webkit-text-stroke:0.3px #1a1a1a">?</div>
<!-- DROPDOWN -->
<div class="a" style="left:613px;top:180px;width:404px;height:93px;background:#fff;border:1px solid #a4a4a4;box-shadow:1px 1px 2px rgba(0,0,0,.12)"></div>
<div class="a" style="left:615px;top:182px;width:400px;height:29px;background:#f9c81f"></div>
<svg class="a" style="left:625px;top:184px" width="26" height="24" viewBox="0 0 26 24"><rect x="10.2" y="5.1" width="6.2" height="10" fill="#fff" stroke="#c8c8c8" stroke-width="1"/><rect x="7.8" y="6.7" width="6.7" height="10.5" fill="#fff" stroke="#7a7a7a" stroke-width="1"/><rect x="5.7" y="8.5" width="7.2" height="10.5" fill="#fff" stroke="#595959" stroke-width="1.1"/><rect x="7.2" y="10" width="4.5" height="5.5" fill="#a5aed0"/><circle cx="9.4" cy="11.6" r="1.3" fill="#8c98bf"/><path d="M7.2 17.3 H11.7" stroke="#a0a8b8" stroke-width="0.8"/><path d="M15.6 8.5 H18.8 V10.3 H21 V13.5 H18.8 V15.8 H15.6 V13.5 H13.8 V10.3 H15.6 Z" fill="#c4f2ac" stroke="#2e8a1e" stroke-width="1.1"/></svg>
<div class="a" style="left:658px;top:189px;font-size:13px;color:#333;line-height:16px;white-space:nowrap">Пригласить к обмену электронными документами</div>
<svg class="a" style="left:625px;top:214px" width="26" height="24" viewBox="0 0 26 24"><path d="M5.5 4.5 H13 L16.5 8 V17.5 H5.5 Z" fill="#fff" stroke="#6a6a78" stroke-width="1.1"/><path d="M13 4.5 V8 H16.5 Z" fill="#7a7a90"/><path d="M7.5 13 H11" stroke="#b0b0b0" stroke-width="0.8"/><circle cx="11" cy="9.8" r="2" fill="#2a7fa0"/><circle cx="17.2" cy="15" r="4.6" fill="#3a86c0"/><path d="M15.5 12.5 L18.5 15 L15.5 17.5" fill="none" stroke="#fff" stroke-width="1"/><path d="M8 16.4 H15.5" stroke="#000" stroke-width="1.4"/><path d="M14.8 13.8 L19.6 16.4 L14.8 18.8 Z" fill="#000"/></svg>
<div class="a" style="left:658px;top:219px;font-size:13px;color:#333;line-height:16px;white-space:nowrap">Настройки отражения в учете</div>
<svg class="a" style="left:625px;top:244px" width="26" height="24" viewBox="0 0 26 24"><path d="M7.6 5.5 H15.5 L18.5 8.5 V18.2 H7.6 Z" fill="#eef2fa" stroke="#6a6e80" stroke-width="1.1"/><path d="M15.5 5.5 V8.5 H18.5 Z" fill="#6a6e80"/><path d="M9.2 10.5 H14.9 M9.2 12.5 H14.9 M9.2 14.4 H13.5" stroke="#7e8494" stroke-width="0.9"/><path d="M17.5 12.2 L21 15.8 H19 V19.8 H16.1 V15.8 H14.1 Z" fill="#1fa020"/></svg>
<div class="a" style="left:658px;top:249px;font-size:13px;color:#333;line-height:16px;white-space:nowrap">Настройки отправки документов</div>
<!-- ARROW -->
<svg class="a" style="left:0;top:0" width="1436" height="790" viewBox="0 0 1436 790"><path d="M1105.5 86.5 L1003 177" stroke="#ec0c0c" stroke-width="3" stroke-linecap="round"/><path d="M995 184.7 L1002.8 173.2 L1008.7 179 Z" fill="#ec0c0c" stroke="#ec0c0c" stroke-width="1" stroke-linejoin="round"/></svg>
</body></html>
